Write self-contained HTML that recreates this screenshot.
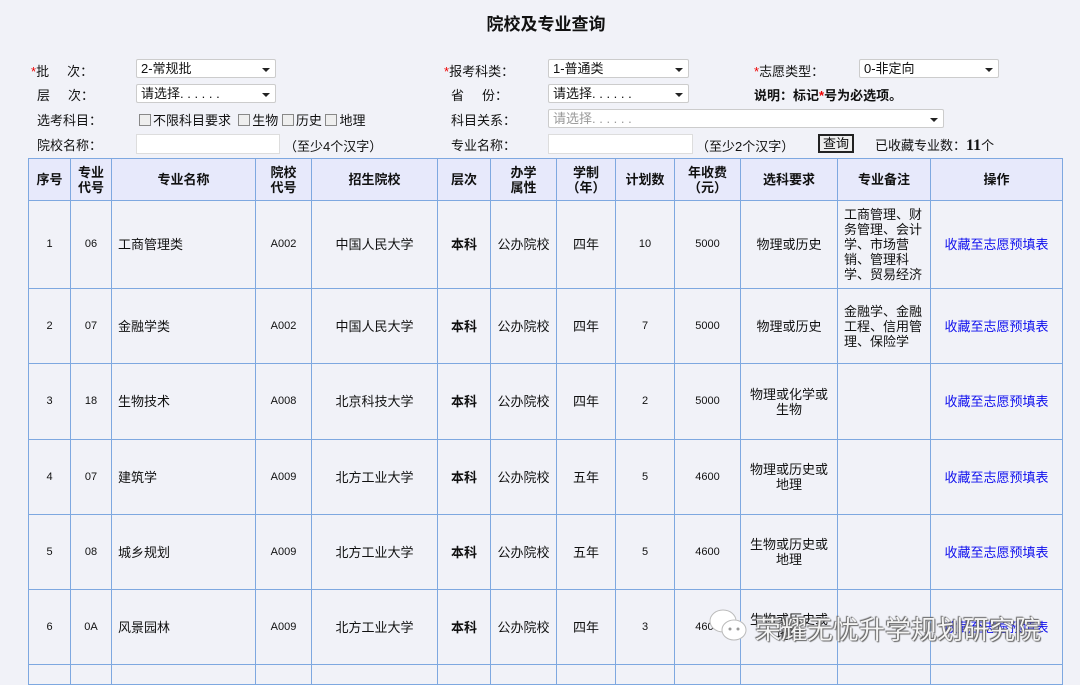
<!DOCTYPE html>
<html><head><meta charset="utf-8"><style>
body{margin:0;width:1080px;height:675px;background:#f1f2f8;font-family:"Liberation Sans","Noto Sans CJK SC",sans-serif;font-size:13px;color:#111;position:relative;overflow:hidden}
.a{position:absolute;white-space:nowrap}
.title{left:6px;width:1080px;text-align:center;top:10px;font-size:17px;font-weight:bold}
.red{color:#e00}
.sel{position:absolute;height:19px;background:#fff;border:1px solid #ccc;border-radius:2px;box-sizing:border-box;font-size:13px;line-height:17px;padding-left:4px}
.sel:after{content:"";position:absolute;right:5px;top:8px;border-left:4px solid transparent;border-right:4px solid transparent;border-top:4px solid #222}
.inp{position:absolute;height:20px;background:#fff;border:1px solid #ddd;box-sizing:border-box}
.cb{display:inline-block;width:10px;height:10px;border:1px solid #888;background:#eee;margin-right:2px;vertical-align:-1px}
table{position:absolute;left:28px;top:158px;border-collapse:collapse;table-layout:fixed}
td,th{border:1px solid #7ea8e0;text-align:center;padding:0;font-size:13px;line-height:15px;vertical-align:middle}
th{background:#e7e9fb;font-weight:bold;height:41px}
td.l{text-align:left;padding-left:6px}
td.sm{font-size:11px}
td.n{text-align:left;padding-left:6px;line-height:15px}
a{color:#1010ee;text-decoration:none}
</style></head><body>
<div class="a title">院校及专业查询</div>
<div class="a" style="left:31px;top:61px"><span class="red">*</span>批&nbsp;&nbsp;&nbsp;&nbsp;&nbsp;次：</div>
<div class="a" style="left:37px;top:85px">层&nbsp;&nbsp;&nbsp;&nbsp;&nbsp;次：</div>
<div class="a" style="left:37px;top:110px">选考科目：</div>
<div class="a" style="left:37px;top:135px">院校名称：</div>
<div class="sel" style="left:136px;top:59px;width:140px">2-常规批</div>
<div class="sel" style="left:136px;top:84px;width:140px">请选择. . . . . .</div>
<div class="a" style="left:139px;top:110px"><span class="cb"></span>不限科目要求&nbsp; <span class="cb"></span>生物 <span class="cb"></span>历史 <span class="cb"></span>地理</div>
<div class="inp" style="left:136px;top:134px;width:144px"></div>
<div class="a" style="left:284px;top:136px">（至少4个汉字）</div>
<div class="a" style="left:444px;top:61px"><span class="red">*</span>报考科类：</div>
<div class="a" style="left:451px;top:85px">省&nbsp;&nbsp;&nbsp;&nbsp;&nbsp;份：</div>
<div class="a" style="left:451px;top:110px">科目关系：</div>
<div class="a" style="left:451px;top:135px">专业名称：</div>
<div class="sel" style="left:548px;top:59px;width:141px">1-普通类</div>
<div class="sel" style="left:548px;top:84px;width:141px">请选择. . . . . .</div>
<div class="sel" style="left:548px;top:109px;width:396px;color:#999">请选择. . . . . .</div>
<div class="inp" style="left:548px;top:134px;width:145px"></div>
<div class="a" style="left:696px;top:136px">（至少2个汉字）</div>
<div class="a" style="left:818px;top:134px;border:2px solid #222;background:#eee;padding:0 3px;line-height:15px">查询</div>
<div class="a" style="left:875px;top:135px">已收藏专业数：<b style="font-family:'Liberation Serif',serif;font-size:16px">11</b>个</div>
<div class="a" style="left:754px;top:61px"><span class="red">*</span>志愿类型：</div>
<div class="sel" style="left:859px;top:59px;width:140px">0-非定向</div>
<div class="a" style="left:754px;top:85px;font-weight:bold">说明：标记<span class="red">*</span>号为必选项。</div>
<table>
<colgroup><col style="width:42px"><col style="width:41px"><col style="width:144px"><col style="width:56px"><col style="width:126px"><col style="width:53px"><col style="width:66px"><col style="width:59px"><col style="width:59px"><col style="width:66px"><col style="width:97px"><col style="width:93px"><col style="width:132px"></colgroup>
<tr><th>序号</th><th>专业<br>代号</th><th>专业名称</th><th>院校<br>代号</th><th>招生院校</th><th>层次</th><th>办学<br>属性</th><th>学制<br>（年）</th><th>计划数</th><th>年收费<br>（元）</th><th>选科要求</th><th>专业备注</th><th>操作</th></tr>
<tr style="height:88px"><td class="sm">1</td><td class="sm">06</td><td class="l">工商管理类</td><td class="sm">A002</td><td>中国人民大学</td><td><b>本科</b></td><td>公办院校</td><td>四年</td><td class="sm">10</td><td class="sm">5000</td><td>物理或历史</td><td class="n">工商管理、财务管理、会计学、市场营销、管理科学、贸易经济</td><td><a>收藏至志愿预填表</a></td></tr>
<tr style="height:75px"><td class="sm">2</td><td class="sm">07</td><td class="l">金融学类</td><td class="sm">A002</td><td>中国人民大学</td><td><b>本科</b></td><td>公办院校</td><td>四年</td><td class="sm">7</td><td class="sm">5000</td><td>物理或历史</td><td class="n">金融学、金融工程、信用管理、保险学</td><td><a>收藏至志愿预填表</a></td></tr>
<tr style="height:76px"><td class="sm">3</td><td class="sm">18</td><td class="l">生物技术</td><td class="sm">A008</td><td>北京科技大学</td><td><b>本科</b></td><td>公办院校</td><td>四年</td><td class="sm">2</td><td class="sm">5000</td><td>物理或化学或<br>生物</td><td></td><td><a>收藏至志愿预填表</a></td></tr>
<tr style="height:75px"><td class="sm">4</td><td class="sm">07</td><td class="l">建筑学</td><td class="sm">A009</td><td>北方工业大学</td><td><b>本科</b></td><td>公办院校</td><td>五年</td><td class="sm">5</td><td class="sm">4600</td><td>物理或历史或<br>地理</td><td></td><td><a>收藏至志愿预填表</a></td></tr>
<tr style="height:75px"><td class="sm">5</td><td class="sm">08</td><td class="l">城乡规划</td><td class="sm">A009</td><td>北方工业大学</td><td><b>本科</b></td><td>公办院校</td><td>五年</td><td class="sm">5</td><td class="sm">4600</td><td>生物或历史或<br>地理</td><td></td><td><a>收藏至志愿预填表</a></td></tr>
<tr style="height:75px"><td class="sm">6</td><td class="sm">0A</td><td class="l">风景园林</td><td class="sm">A009</td><td>北方工业大学</td><td><b>本科</b></td><td>公办院校</td><td>四年</td><td class="sm">3</td><td class="sm">4600</td><td>生物或历史或<br>地理</td><td></td><td><a>收藏至志愿预填表</a></td></tr>
<tr style="height:20px"><td></td><td></td><td></td><td></td><td></td><td></td><td></td><td></td><td></td><td></td><td></td><td></td><td></td></tr>
</table>
<svg class="a" style="left:708px;top:608px" width="42" height="36" viewBox="0 0 42 36"><ellipse cx="15" cy="13" rx="13" ry="11" fill="#fff" stroke="#bbb"/><ellipse cx="26" cy="22" rx="12" ry="10" fill="#fff" stroke="#bbb"/><circle cx="22" cy="21" r="1.5" fill="#999"/><circle cx="30" cy="21" r="1.5" fill="#999"/></svg>
<div class="a" style="left:755px;top:610px;font-size:26px;color:#f4f4f4;text-shadow:0 0 1px #555,1px 1px 1px #666,-1px -1px 1px #666">荣耀无忧升学规划研究院</div>
</body></html>
